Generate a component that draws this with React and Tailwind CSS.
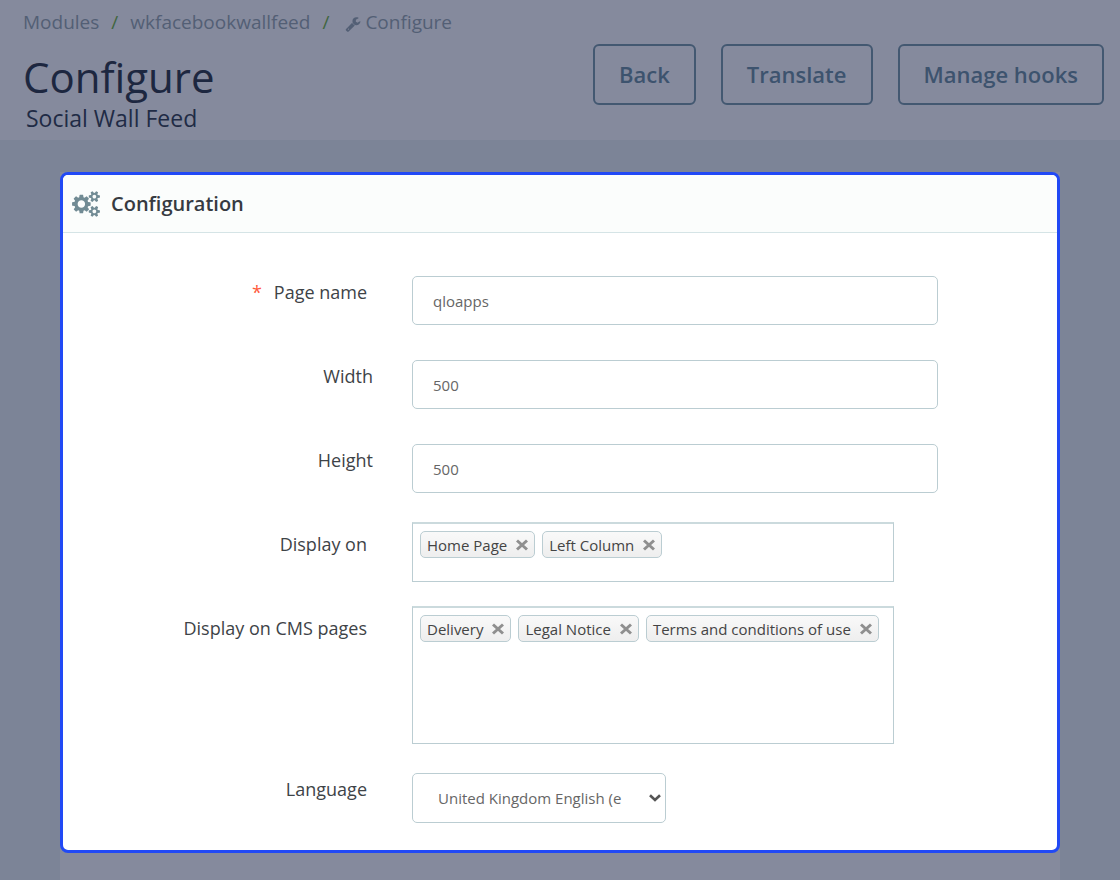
import { useState } from "react";

function WrenchIcon({ className }) {
  return (
    <svg viewBox="0 0 1792 1792" className={className} fill="currentColor" aria-hidden="true">
      <path d="M448 1472q0-26-19-45t-45-19-45 19-19 45 19 45 45 19 45-19 19-45zm644-420l-682 682q-37 37-90 37-52 0-91-37l-106-108q-38-36-38-90 0-53 38-91l681-681q39 98 114.5 173.5t173.5 114.5zm634-435q0 39-23 106-47 134-164.5 217.5t-258.5 83.5q-185 0-316.5-131.5t-131.5-316.5 131.5-316.5 316.5-131.5q58 0 121.5 16.5t107.5 46.5q16 11 16 28t-16 28l-293 169v224l193 107q5-3 79-48.5t135.5-81 70.5-35.5q15 0 23.5 10t8.5 25z" />
    </svg>
  );
}

function CogsIcon({ className }) {
  return (
    <svg viewBox="0 0 1920 1792" className={className} fill="currentColor" aria-hidden="true">
      <path d="M896 896q0-106-75-181t-181-75-181 75-75 181 75 181 181 75 181-75 75-181zm768 512q0-52-38-90t-90-38-90 38-38 90q0 53 37.5 90.5t90.5 37.5 90.5-37.5 37.5-90.5zm0-1024q0-52-38-90t-90-38-90 38-38 90q0 53 37.5 90.5t90.5 37.5 90.5-37.5 37.5-90.5zm-384 421v185q0 10-7 19.5t-16 10.5l-155 24q-11 35-32 76 34 48 90 115 7 11 7 20 0 12-7 19-23 30-82.5 89.5t-78.5 59.5q-11 0-21-7l-115-90q-37 19-77 31-11 108-23 155-7 24-30 24h-186q-11 0-20-7.5t-10-17.5l-23-153q-34-10-75-31l-118 89q-7 7-20 7-11 0-21-8-144-133-144-160 0-9 7-19 10-14 41-53t47-61q-23-44-35-82l-152-24q-10-1-17-9.5t-7-19.5v-185q0-10 7-19.5t16-10.5l155-24q11-35 32-76-34-48-90-115-7-11-7-20 0-12 7-20 22-30 82-89t79-59q11 0 21 7l115 90q34-18 77-32 11-108 23-154 7-24 30-24h186q11 0 20 7.5t10 17.5l23 153q34 10 75 31l118-89q8-7 20-7 11 0 21 8 144 133 144 160 0 8-7 19-12 16-42 54t-45 60q23 48 34 82l152 23q10 2 17 10.5t7 19.5zm640 533v140q0 16-149 31-12 27-30 52 51 113 51 138 0 4-4 7-122 71-124 71-8 0-46-47t-52-68q-20 2-30 2t-30-2q-14 21-52 68t-46 47q-2 0-124-71-4-3-4-7 0-25 51-138-18-25-30-52-149-15-149-31v-140q0-16 149-31 13-29 30-52-51-113-51-138 0-4 4-7 4-2 35-20t59-34 30-16q8 0 46 46.5t52 67.5q20-2 30-2t30 2q51-71 92-112l6-2q4 0 124 70 4 3 4 7 0 25-51 138 17 23 30 52 149 15 149 31zm0-1024v140q0 16-149 31-12 27-30 52 51 113 51 138 0 4-4 7-122 71-124 71-8 0-46-47t-52-68q-20 2-30 2t-30-2q-14 21-52 68t-46 47q-2 0-124-71-4-3-4-7 0-25 51-138-18-25-30-52-149-15-149-31v-140q0-16 149-31 13-29 30-52-51-113-51-138 0-4 4-7 4-2 35-20t59-34 30-16q8 0 46 46.5t52 67.5q20-2 30-2t30 2q51-71 92-112l6-2q4 0 124 70 4 3 4 7 0 25-51 138 17 23 30 52 149 15 149 31z" />
    </svg>
  );
}

const labelText = "shrink-0 text-right text-lg leading-6 text-[#3e4347]";

function Field({ id, label, value, required }) {
  return (
    <div className="flex">
      <label
        htmlFor={id}
        className={`${labelText} pt-1 ${required ? "mr-[45px] w-[304px]" : "mr-[39px] w-[310px]"}`}
      >
        {required && <span className="mr-3 text-[#ff5a3c]">*</span>}
        {label}
      </label>
      <input
        id={id}
        type="text"
        defaultValue={value}
        className="h-[49px] w-[526px] rounded-[5px] border border-[#bbcdd2] bg-white px-5 text-[15px] text-[#666666] outline-none"
      />
    </div>
  );
}

function TagBox({ label, items, boxClass }) {
  const [tags, setTags] = useState(items);
  return (
    <div className="flex">
      <span className={`${labelText} mr-[45px] w-[304px] pt-[10px]`}>{label}</span>
      <ul
        aria-label={label}
        className={`flex w-[482px] flex-wrap content-start gap-[7px] border border-t-2 border-[#bbcdd2] border-t-[#cbdadd] px-[7px] pt-[7px] ${boxClass}`}
      >
        {tags.map((tag) => (
          <li
            key={tag}
            className="flex h-[27px] items-center gap-[9px] rounded-[5px] border border-[#bbcdd2] bg-gradient-to-b from-[#f9f9f9] to-[#eeeeee] px-[6px] text-[15px] leading-5 text-[#444444]"
          >
            {tag}
            <button
              type="button"
              aria-label={`Remove ${tag}`}
              onClick={() => setTags(tags.filter((t) => t !== tag))}
            >
              <svg viewBox="0 0 12 12" className="size-3" fill="none" stroke="#8f8f8f" strokeWidth="3">
                <path d="M1 1.5L11 10.5M11 1.5L1 10.5" />
              </svg>
            </button>
          </li>
        ))}
      </ul>
    </div>
  );
}

const actions = ["Back", "Translate", "Manage hooks"];

export default function App() {
  return (
    <div className="flex min-h-screen flex-col bg-[#7c8497] font-['Open_Sans',sans-serif]">
      <header className="flex h-[140px] items-start justify-between bg-[#858a9d] pr-4 pl-[23px]">
        <div>
          <nav aria-label="Breadcrumb" className="flex h-11 items-center gap-3 text-[19px] text-[#535f75]">
            <a href="#modules">Modules</a>
            <span className="text-[#41663f]">/</span>
            <a href="#module">wkfacebookwallfeed</a>
            <span className="text-[#41663f]">/</span>
            <span className="flex items-center gap-1 pl-1">
              <WrenchIcon className="mt-[3px] size-4" />
              Configure
            </span>
          </nav>
          <h1 className="text-[42px] leading-[66px] text-[#1d2740]">Configure</h1>
          <p className="pl-[3px] text-[23px] leading-4 text-[#1f2b45]">Social Wall Feed</p>
        </div>
        <div className="flex gap-[25px] pt-11">
          {actions.map((action) => (
            <button
              key={action}
              type="button"
              className="h-[61px] rounded-md border-2 border-[#435871] px-6 text-[22px] font-semibold text-[#3d536e]"
            >
              {action}
            </button>
          ))}
        </div>
      </header>
      <main className="flex grow flex-col px-[60px] pt-8">
        <div className="grow bg-[#858a9d] pb-7">
          <section className="rounded-lg border-3 border-[#2149f5] bg-white pb-[27px]">
            <h2 className="flex h-[58px] items-center gap-[11px] rounded-t-[5px] border-b border-[#d5e4e6] bg-[#fbfdfc] px-[9px] pt-px text-xl font-semibold text-[#363a41]">
              <CogsIcon className="h-[26px] w-7 text-[#718b94]" />
              Configuration
            </h2>
            <form className="flex flex-col gap-[29px] pt-[43px]">
              <div className="flex flex-col gap-[35px]">
                <Field id="page-name" label="Page name" value="qloapps" required />
                <Field id="width" label="Width" value="500" />
                <Field id="height" label="Height" value="500" />
              </div>
              <div className="flex flex-col gap-6">
                <TagBox label="Display on" items={["Home Page", "Left Column"]} boxClass="min-h-[60px]" />
                <TagBox
                  label="Display on CMS pages"
                  items={["Delivery", "Legal Notice", "Terms and conditions of use"]}
                  boxClass="min-h-[138px]"
                />
              </div>
              <div className="flex">
                <label htmlFor="language" className={`${labelText} mr-[45px] w-[304px] pt-1`}>
                  Language
                </label>
                <div className="relative w-[254px]">
                  <select
                    id="language"
                    className="h-[50px] w-full appearance-none rounded-[5px] border border-[#bbcdd2] bg-white pr-[43px] pl-[25px] text-[15px] text-[#666666]"
                  >
                    <option>United Kingdom English (en-GB)</option>
                  </select>
                  <svg
                    viewBox="0 0 12 8"
                    className="pointer-events-none absolute top-[21px] right-[5px] h-2 w-3"
                    fill="none"
                    stroke="#555555"
                    strokeWidth="2.6"
                    aria-hidden="true"
                  >
                    <path d="M1 1.2L6 6L11 1.2" />
                  </svg>
                </div>
              </div>
            </form>
          </section>
        </div>
      </main>
    </div>
  );
}
